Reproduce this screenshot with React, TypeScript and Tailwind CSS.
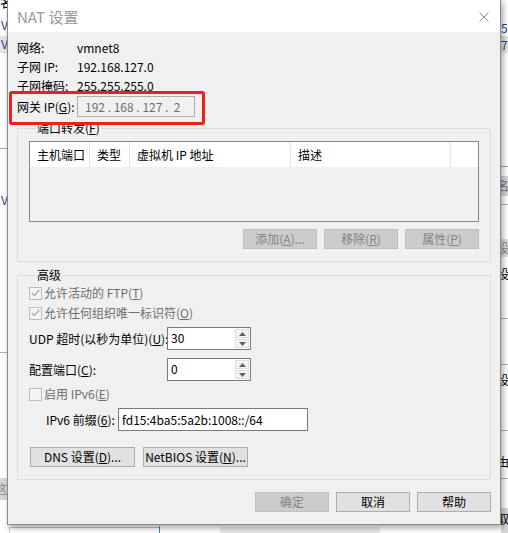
import type { ReactNode } from 'react';

// NAT settings dialog (VMware virtual network editor) sitting over its parent window.

const FONT = "font-['Noto_Sans_CJK_SC','Noto_Sans',sans-serif]";

function K({ children }: { children: ReactNode }) {
  return <span className="underline underline-offset-[1px]">{children}</span>;
}

export default function App() {
  return (
    <div className={`relative h-[533px] w-[508px] overflow-hidden bg-white text-[12px] text-black ${FONT}`}>
      <ParentWindow />
      <div className="absolute left-[7px] top-[-1px] flex h-[526px] w-[494px] flex-col border border-[#8a8a8a] bg-[#f0f0f0] shadow-[2px_3px_6px_rgba(0,0,0,0.35)]">
        <TitleBar />
        <Body />
        {/* screenshot annotation around the gateway row */}
        <div className="pointer-events-none absolute left-[1px] top-[91px] h-[34px] w-[196px] rounded-[3px] border-[3px] border-[#e8221b]" />
      </div>
    </div>
  );
}

// ---------------------------------------------------------------------------
// What peeks out behind the dialog
// ---------------------------------------------------------------------------
function ParentWindow() {
  return (
    <div className="absolute inset-0 text-[12px]">
      {/* left edge */}
      <div className="absolute left-[0px] top-[-6px] text-[13px] leading-[16px]">名</div>
      <div className="absolute left-[1px] top-[17px] leading-[16px] text-[#1f3f8f]">V</div>
      <div className="absolute left-0 top-[36px] h-[17px] w-[8px] bg-[#e5e5e5]" />
      <div className="absolute left-[1px] top-[36px] leading-[16px] text-[#1f3f8f]">V</div>
      <div className="absolute left-0 top-[148px] h-px w-[8px] bg-[#a0a0a0]" />
      <div className="absolute left-[1px] top-[192px] leading-[16px] text-[#1f3f8f]">V</div>
      <div className="absolute left-0 top-[352px] h-px w-[8px] bg-[#b0b0b0]" />
      <div className="absolute left-0 top-[478px] h-[22px] w-[8px] bg-[#d6d6d6]" />
      <div className="absolute left-[-5px] top-[481px] leading-[16px] text-[#8a8a8a]">这</div>
      <div className="absolute left-[9px] top-[527px] h-[6px] w-[150px] border-l border-t border-[#c8c8c8]" />
      <div className="absolute left-[159px] top-[526px] h-[7px] w-px bg-[#3b82d0]" />
      {/* right edge */}
      <div className="absolute left-[501px] top-[20px] leading-[16px] text-[#1f3f8f]">5.</div>
      <div className="absolute left-[501px] top-[36px] h-[17px] w-[8px] bg-[#e5e5e5]" />
      <div className="absolute left-[501px] top-[37px] leading-[16px] text-[#1f3f8f]">7.</div>
      <div className="absolute left-[501px] top-[166px] h-px w-[8px] bg-[#a0a0a0]" />
      <div className="absolute left-[501px] top-[176px] h-[20px] w-[8px] bg-[#d6d6d6]" />
      <div className="absolute left-[497px] top-[178px] leading-[16px] text-[#707070]">名</div>
      <div className="absolute left-[501px] top-[204px] h-px w-[8px] bg-[#b0b0b0]" />
      <div className="absolute left-[501px] top-[239px] h-[18px] w-[8px] bg-[#dedede]" />
      <div className="absolute left-[497px] top-[240px] leading-[16px] text-[#8a8a8a]">设</div>
      <div className="absolute left-[497px] top-[266px] leading-[16px]">设</div>
      <div className="absolute left-[501px] top-[318px] h-px w-[8px] bg-[#b0b0b0]" />
      <div className="absolute left-[501px] top-[364px] h-px w-[8px] bg-[#b0b0b0]" />
      <div className="absolute left-[497px] top-[372px] leading-[16px]">设</div>
      <div className="absolute left-[501px] top-[430px] h-px w-[8px] bg-[#b0b0b0]" />
      <div className="absolute left-[497px] top-[454px] leading-[16px]">由</div>
      <div className="absolute left-[501px] top-[478px] h-px w-[8px] bg-[#b0b0b0]" />
      <div className="absolute left-[501px] top-[508px] h-[25px] w-[8px] bg-[#d6d6d6]" />
      <div className="absolute left-[497px] top-[511px] leading-[16px]">取</div>
      <div className="absolute left-[220px] top-[527px] h-[6px] w-[160px] bg-[#e8e8e8]" />
    </div>
  );
}

// ---------------------------------------------------------------------------
// Dialog
// ---------------------------------------------------------------------------
function TitleBar() {
  return (
    <div className="flex h-[32px] shrink-0 items-center justify-between bg-white pl-[9px] pr-[10px] pt-px">
      <span className="text-[15px] leading-[20px] text-[#9a9a9a]">NAT 设置</span>
      <svg width="10" height="10" viewBox="0 0 10 10" className="mr-[1px]">
        <path d="M0.5 0.5 L9.5 9.5 M9.5 0.5 L0.5 9.5" stroke="#8c8c8c" strokeWidth="1" />
      </svg>
    </div>
  );
}

function InfoRow({ label, value }: { label: ReactNode; value: string }) {
  return (
    <div className="flex h-[19px] items-center leading-[19px]">
      <span className="w-[60px] whitespace-nowrap">{label}</span>
      <span>{value}</span>
    </div>
  );
}

function Body() {
  return (
    <div className="flex flex-1 flex-col px-[9px] pt-[6px]">
      <InfoRow label="网络:" value="vmnet8" />
      <InfoRow label="子网 IP:" value="192.168.127.0" />
      <InfoRow label="子网掩码:" value="255.255.255.0" />
      <div className="mt-px flex h-[21px] items-center">
        <span className="w-[60px] whitespace-nowrap">
          网关 IP(<K>G</K>):
        </span>
        <div className="flex h-[21px] w-[118px] items-center border border-[#adadad] pl-[7px] leading-[19px] text-[#6d6d6d]">
          192&nbsp;.&nbsp;168&nbsp;.&nbsp;127&nbsp;.&nbsp;&nbsp;2
        </div>
      </div>

      <PortForwarding />
      <Advanced />

      <div className="mt-[12px] flex justify-end gap-[7px]">
        <Btn disabled w="w-[74px]">确定</Btn>
        <Btn w="w-[74px]">取消</Btn>
        <Btn w="w-[74px]">帮助</Btn>
      </div>
    </div>
  );
}

function Group({ title, className, children }: { title: ReactNode; className: string; children: ReactNode }) {
  return (
    <fieldset className={`w-[474px] border border-[#dcdcdc] px-[11px] ${className}`}>
      <legend className="ml-[7px] px-px leading-[16px]">{title}</legend>
      {children}
    </fieldset>
  );
}

function PortForwarding() {
  const cols = [
    { w: 'w-[60px]', t: '主机端口' },
    { w: 'w-[40px]', t: '类型' },
    { w: 'w-[161px]', t: '虚拟机 IP 地址' },
    { w: 'w-[160px]', t: '描述' },
  ];
  return (
    <Group
      className="mt-[3px] pb-[12px]"
      title={
        <>
          端口转发(<K>F</K>)
        </>
      }
    >
      <div className="mt-[5px] h-[81px] w-[450px] border border-[#828790] bg-[#f0f0f0]">
        <div className="flex h-[25px] bg-white">
          {cols.map((c) => (
            <div key={c.t} className={`${c.w} whitespace-nowrap border-r border-[#e5e5e5] pl-[7px] leading-[25px]`}>
              {c.t}
            </div>
          ))}
        </div>
      </div>
      <div className="mt-[7px] flex justify-end gap-[7px]">
        <Btn disabled w="w-[74px]">
          添加(<K>A</K>)...
        </Btn>
        <Btn disabled w="w-[74px]">
          移除(<K>R</K>)
        </Btn>
        <Btn disabled w="w-[74px]">
          属性(<K>P</K>)
        </Btn>
      </div>
    </Group>
  );
}

function Advanced() {
  return (
    <Group className="mt-[5px] pb-[12px]" title="高级">
      <CheckRow checked>
        允许活动的 FTP(<K>T</K>)
      </CheckRow>
      <CheckRow checked>
        允许任何组织唯一标识符(<K>O</K>)
      </CheckRow>

      <div className="mt-[4px] flex items-center">
        <span className="w-[138px] whitespace-nowrap">
          UDP 超时(以秒为单位)(<K>U</K>):
        </span>
        <Spin value="30" />
      </div>
      <div className="mt-[8px] flex items-center">
        <span className="w-[138px] whitespace-nowrap">
          配置端口(<K>C</K>):
        </span>
        <Spin value="0" />
      </div>

      <div className="mt-[3px]">
        <CheckRow>
          启用 IPv6(<K>E</K>)
        </CheckRow>
      </div>

      <div className="mt-[4px] flex items-center pl-[17px]">
        <span className="w-[72px] whitespace-nowrap">
          IPv6 前缀(<K>6</K>):
        </span>
        <div className="flex h-[23px] w-[190px] items-center border border-[#7a7a7a] bg-white pl-[3px]">
          fd15:4ba5:5a2b:1008::/64
        </div>
      </div>

      <div className="ml-px mt-[16px] flex gap-[8px]">
        <Btn w="w-[105px]">
          DNS 设置(<K>D</K>)...
        </Btn>
        <Btn w="w-[105px]">
          NetBIOS 设置(<K>N</K>)...
        </Btn>
      </div>
    </Group>
  );
}

function CheckRow({ checked, children }: { checked?: boolean; children: ReactNode }) {
  return (
    <div className="flex h-[20px] items-center whitespace-nowrap text-[#6d6d6d]">
      <div className="mr-[2px] flex h-[13px] w-[13px] items-center justify-center border border-[#bcbcbc] bg-[#f4f4f4]">
        {checked && (
          <svg width="9" height="8" viewBox="0 0 9 8">
            <path d="M0.8 4 L3.4 6.6 L8.2 1" fill="none" stroke="#a8a8a8" strokeWidth="1.3" />
          </svg>
        )}
      </div>
      <span>{children}</span>
    </div>
  );
}

function Spin({ value }: { value: string }) {
  return (
    <div className="flex h-[23px] w-[84px] border border-[#7a7a7a] bg-white">
      <div className="flex-1 pl-[3px] leading-[20px]">{value}</div>
      <div className="flex w-[15px] flex-col gap-px py-px pr-px">
        <div className="flex flex-1 items-center justify-center border border-[#dcdcdc] bg-[#f4f4f4]">
          <svg width="7" height="4" viewBox="0 0 7 4">
            <path d="M0 4 L3.5 0 L7 4 Z" fill="#606060" />
          </svg>
        </div>
        <div className="flex flex-1 items-center justify-center border border-[#dcdcdc] bg-[#f4f4f4]">
          <svg width="7" height="4" viewBox="0 0 7 4">
            <path d="M0 0 L3.5 4 L7 0 Z" fill="#606060" />
          </svg>
        </div>
      </div>
    </div>
  );
}

function Btn({ disabled, w, children }: { disabled?: boolean; w: string; children: ReactNode }) {
  return (
    <div
      className={`flex h-[20px] ${w} items-center justify-center whitespace-nowrap border leading-[18px] ${
        disabled ? 'border-[#bfbfbf] bg-[#cccccc] text-[#838383]' : 'border-[#adadad] bg-[#e1e1e1] text-black'
      }`}
    >
      {children}
    </div>
  );
}
